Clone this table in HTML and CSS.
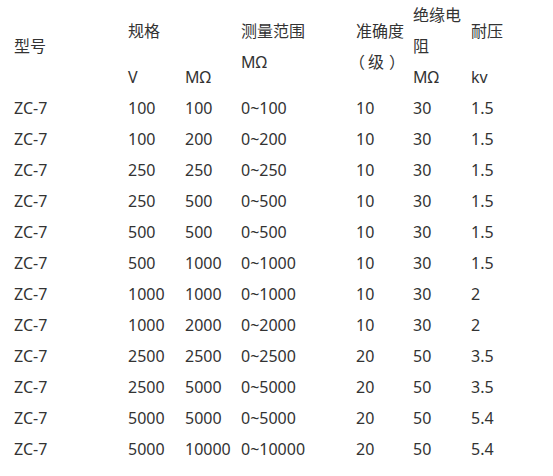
FILE: index.html
```html
<!DOCTYPE html>
<html lang="zh">
<head>
<meta charset="utf-8">
<title>ZC-7</title>
<link rel="stylesheet" href="styles.css">
</head>
<body>
<table class="spec">
  <colgroup>
    <col class="c-model"><col class="c-v"><col class="c-mo"><col class="c-range"><col class="c-acc"><col class="c-ins"><col class="c-volt">
  </colgroup>
  <thead>
    <tr>
      <th rowspan="2">型号</th>
      <th colspan="2" class="top">规格</th>
      <th rowspan="2">测量范围<br>MΩ</th>
      <th rowspan="2">准确度<br><span class="pl">（</span>级<span class="pr">）</span></th>
      <th rowspan="2">绝缘电<br>阻<br>MΩ</th>
      <th class="top">耐压</th>
    </tr>
    <tr>
      <th>V</th>
      <th>MΩ</th>
      <th>kv</th>
    </tr>
  </thead>
  <tbody>
    <tr><td>ZC-7</td><td>100</td><td>100</td><td>0~100</td><td>10</td><td>30</td><td>1.5</td></tr>
    <tr><td>ZC-7</td><td>100</td><td>200</td><td>0~200</td><td>10</td><td>30</td><td>1.5</td></tr>
    <tr><td>ZC-7</td><td>250</td><td>250</td><td>0~250</td><td>10</td><td>30</td><td>1.5</td></tr>
    <tr><td>ZC-7</td><td>250</td><td>500</td><td>0~500</td><td>10</td><td>30</td><td>1.5</td></tr>
    <tr><td>ZC-7</td><td>500</td><td>500</td><td>0~500</td><td>10</td><td>30</td><td>1.5</td></tr>
    <tr><td>ZC-7</td><td>500</td><td>1000</td><td>0~1000</td><td>10</td><td>30</td><td>1.5</td></tr>
    <tr><td>ZC-7</td><td>1000</td><td>1000</td><td>0~1000</td><td>10</td><td>30</td><td>2</td></tr>
    <tr><td>ZC-7</td><td>1000</td><td>2000</td><td>0~2000</td><td>10</td><td>30</td><td>2</td></tr>
    <tr><td>ZC-7</td><td>2500</td><td>2500</td><td>0~2500</td><td>20</td><td>50</td><td>3.5</td></tr>
    <tr><td>ZC-7</td><td>2500</td><td>5000</td><td>0~5000</td><td>20</td><td>50</td><td>3.5</td></tr>
    <tr><td>ZC-7</td><td>5000</td><td>5000</td><td>0~5000</td><td>20</td><td>50</td><td>5.4</td></tr>
    <tr><td>ZC-7</td><td>5000</td><td>10000</td><td>0~10000</td><td>20</td><td>50</td><td>5.4</td></tr>
  </tbody>
</table>
</body>
</html>
```
FILE: styles.css
```css
html, body {
  margin: 0;
  padding: 0;
  background: #ffffff;
}
body {
  font-family: "Noto Sans", "Noto Sans CJK SC", sans-serif;
  font-size: 16px;
  color: #333333;
}
.spec {
  border-collapse: collapse;
  table-layout: fixed;
  width: 530px;
  margin-left: 8px;
}
.c-model { width: 114px; }
.c-v { width: 57px; }
.c-mo { width: 56px; }
.c-range { width: 115px; }
.c-acc { width: 57px; }
.c-ins { width: 58px; }
.c-volt { width: 73px; }
.spec th,
.spec td {
  padding: 0 0 0 6px;
  line-height: 31px;
  font-weight: normal;
  text-align: left;
  vertical-align: middle;
  white-space: nowrap;
}
.spec th {
  height: 31px;
}
.spec th.top {
  height: 62px;
}
.pl {
  margin-left: -7px;
  margin-right: 3px;
}
.pr {
  margin-left: 5px;
}
```
